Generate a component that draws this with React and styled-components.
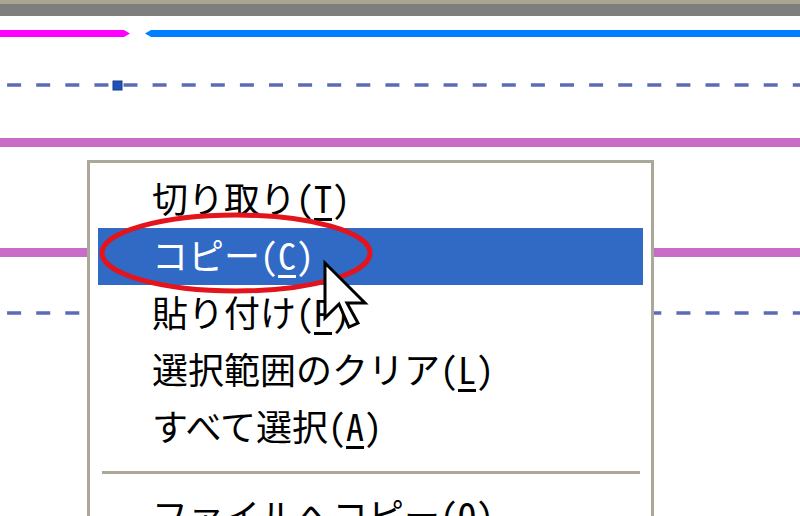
import React from "react";
import styled, { createGlobalStyle } from "styled-components";

const GlobalStyle = createGlobalStyle`
  html, body {
    margin: 0;
    padding: 0;
    background: #fff;
    overflow: hidden;
  }
`;

const Page = styled.div`
  position: relative;
  width: 800px;
  height: 516px;
  overflow: hidden;
  background: #fff;
  font-family: "Noto Sans CJK JP", "Noto Sans", sans-serif;
`;

const TitleBand = styled.div`
  height: 12px;
  border-top: 4px solid #aaa593;
  background: #7e7e7e;
`;

const Canvas = styled.svg`
  display: block;
`;

const ContextMenu = styled.div`
  position: absolute;
  left: 87px;
  top: 160px;
  width: 567px;
  height: 400px;
  box-sizing: border-box;
  border: 3px solid #aca899;
  padding: 8px 8px 0 8px;
  background: #fff;
`;

const MenuItem = styled.div`
  height: 57px;
  display: flex;
  align-items: center;
  padding-left: 54px;
  padding-bottom: 5px;
  box-sizing: border-box;
  font-size: 36px;
  line-height: 1;
  white-space: nowrap;
  background: ${(p) => (p.$active ? "#316ac5" : "transparent")};
  color: ${(p) => (p.$active ? "#fff" : "#000")};
`;

const Key = styled.span`
  font-feature-settings: "hwid";
  u {
    text-decoration-thickness: 3px;
    text-underline-offset: 5px;
  }
`;

const Separator = styled.div`
  height: 32px;
  display: flex;
  align-items: center;
  &::after {
    content: "";
    flex: 1;
    height: 3px;
    margin: 0 3px 0 4px;
    background: #aca899;
  }
`;

const Overlay = styled.svg`
  position: absolute;
  left: 0;
  top: 0;
  pointer-events: none;
`;

const items = [
  { label: "切り取り", key: "T" },
  { label: "コピー", key: "C", active: true },
  { label: "貼り付け", key: "P" },
  { label: "選択範囲のクリア", key: "L" },
  { label: "すべて選択", key: "A" },
];

function Item({ label, k, active }) {
  return (
    <MenuItem $active={active}>
      {label}
      <Key>
        (<u>{k}</u>)
      </Key>
    </MenuItem>
  );
}

function Chart() {
  // y values are page coordinates minus the 16px band
  const dash = { stroke: "#5b6bb6", strokeWidth: 3.5, strokeDasharray: "14 15.1", strokeDashoffset: 22 };
  return (
    <Canvas width="800" height="500" viewBox="0 0 800 500">
      <polygon points="0,14 124,14 130,17.5 124,21 0,21" fill="#ff00ff" />
      <polygon points="800,14 151,14 145,17.5 151,21 800,21" fill="#0080ff" />
      <line x1="0" y1="69" x2="800" y2="69" {...dash} />
      <rect x="113" y="65" width="9" height="9" fill="#1f52b8" stroke="#163a8c" strokeWidth="1" />
      <rect x="0" y="122" width="800" height="9" fill="#c86cc8" />
      <rect x="0" y="232" width="800" height="9" fill="#c86cc8" />
      <line x1="0" y1="297" x2="800" y2="297" {...dash} />
    </Canvas>
  );
}

export default function App() {
  return (
    <Page>
      <GlobalStyle />
      <TitleBand />
      <Chart />
      <ContextMenu>
        {items.map((it) => (
          <Item key={it.key} label={it.label} k={it.key} active={it.active} />
        ))}
        <Separator />
        <Item label="ファイルへコピー" k="O" />
      </ContextMenu>
      <Overlay width="800" height="516" viewBox="0 0 800 516">
        <ellipse cx="236" cy="253" rx="134" ry="38" fill="none" stroke="#e3141c" strokeWidth="5" />
        <polygon
          points="325,263 325,318 339,304 349,327 358,323 347,303 365,303"
          fill="#fff"
          stroke="#000"
          strokeWidth="3"
          strokeLinejoin="miter"
        />
      </Overlay>
    </Page>
  );
}
